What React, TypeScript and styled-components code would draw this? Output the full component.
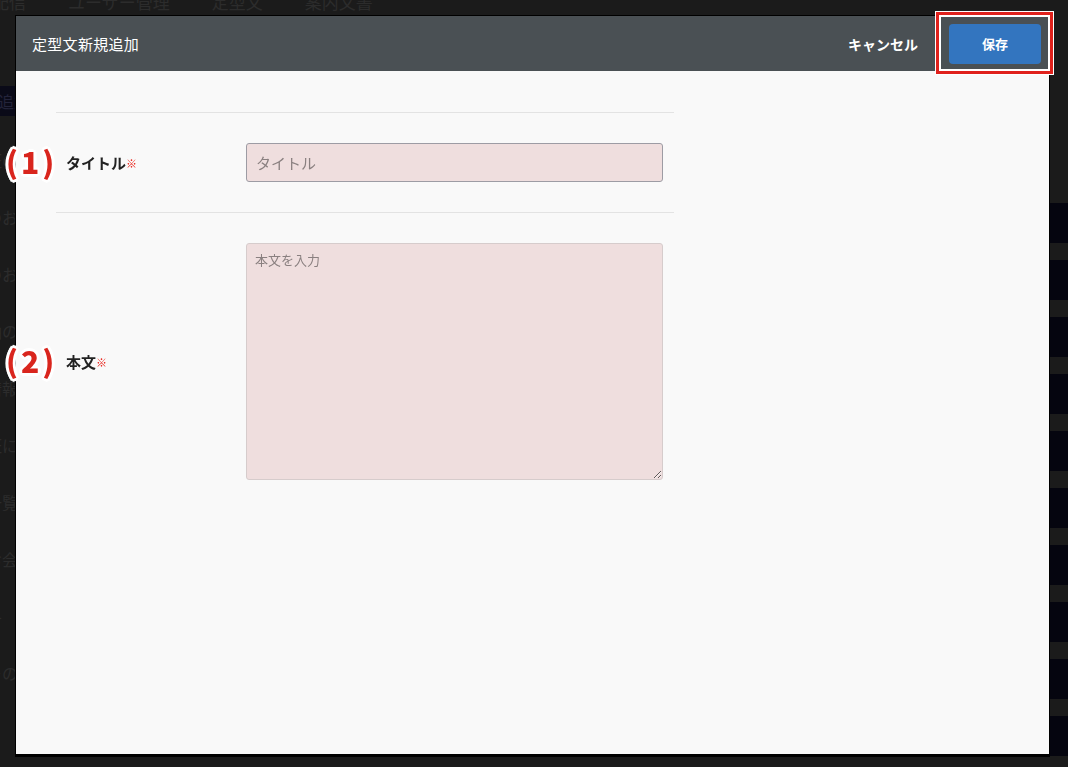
import React from 'react';
import styled, { createGlobalStyle } from 'styled-components';

const GlobalStyle = createGlobalStyle`
  html, body {
    margin: 0;
    padding: 0;
    background: #1b1b1b;
    overflow: hidden;
  }
  body {
    font-family: "Noto Sans CJK JP", "Noto Sans", sans-serif;
  }
`

/* dimmed page behind the dialog */
const BackPage = styled.div`
  width: 1068px;
  height: 767px;
  overflow: hidden;
  color: #2c2c2c;
  display: flex;
  flex-direction: column;
`

const BackNav = styled.nav`
  display: flex;
  gap: 42px;
  margin-top: -8px;
  margin-left: -8px;
  font-size: 17px;
  line-height: 20px;
  height: 20px;
`

const BackBody = styled.div`
  flex: 1;
  display: flex;
  justify-content: space-between;
`

const BackSide = styled.ul`
  list-style: none;
  margin: 74px 0 0 -14px;
  padding: 0;
  display: flex;
  flex-direction: column;
  font-size: 16px;
`

const BackAddButton = styled.li`
  background: #0a0a18;
  color: #23233a;
  height: 30px;
  line-height: 30px;
  padding-left: 12px;
  width: 60px;
  margin-bottom: 32px;
`

const BackSideItem = styled.li`
  height: 57px;
  line-height: 24px;
`

const BackRight = styled.div`
  margin: 150px -30px 0 0;
  display: flex;
  flex-direction: column;
  gap: 17px;
  width: 80px;
  font-size: 16px;
  font-weight: bold;
`

const BackOpButton = styled.div`
  height: 40px;
  border-radius: 5px;
  background: #05050f;
`

/* dialog */
const Overlay = styled.div`
  position: fixed;
  inset: 0;
`

const Dialog = styled.div`
  position: absolute;
  top: 16px;
  left: 16px;
  width: 1033px;
  height: 738px;
  background: #f9f9f9;
  box-shadow: 0 0 0 1px #000, 0 2px 0 1px #000;
  display: flex;
  flex-direction: column;
`

const Header = styled.header`
  position: relative;
  height: 55px;
  background: #4a5054;
  display: flex;
  align-items: center;
  padding: 0 8px 0 16px;
  color: #fff;
`

const Title = styled.h1`
  margin: 0;
  flex: 1;
  font-size: 15px;
  font-weight: normal;
  letter-spacing: 0.3px;
`

const CancelButton = styled.button`
  background: none;
  border: none;
  color: #fff;
  font-family: inherit;
  font-size: 14px;
  font-weight: bold;
  padding: 0;
  margin-right: 31px;
  cursor: pointer;
`

const SaveButton = styled.button`
  width: 92px;
  height: 40px;
  background: #3375bf;
  border: none;
  border-radius: 4px;
  color: #fff;
  font-family: inherit;
  font-size: 13px;
  font-weight: bold;
  cursor: pointer;
`

const Highlight = styled.div`
  position: absolute;
  top: -4px;
  right: -4px;
  width: 117px;
  height: 62px;
  box-sizing: border-box;
  border: 3px solid #e0211c;
  box-shadow: inset 0 0 0 2px #fff, 0 0 0 1px #fff;
  pointer-events: none;
`

const Body = styled.div`
  flex: 1;
  padding: 41px 0 0 40px;
`

const Form = styled.form`
  width: 618px;
`

const Row = styled.div`
  position: relative;
  display: grid;
  grid-template-columns: 180px 417px;
  align-items: center;
  padding: 30px 0 30px 10px;
  border-top: 1px solid #e3e3e3;
`

const Label = styled.label`
  font-size: 15px;
  font-weight: bold;
  color: #222;
`

const Required = styled.span`
  color: #e8180f;
  font-size: 11px;
  font-weight: 900;
  vertical-align: 1px;
`

const Marker = styled.span`
  position: absolute;
  left: -50px;
  top: 50%;
  transform: translateY(-54%);
  font-family: "Noto Sans CJK JP", "Noto Sans", sans-serif;
  font-size: 30px;
  font-weight: 900;
  color: #d9251d;
  letter-spacing: 3px;
  text-shadow:
    2px 0 0 #fff, -2px 0 0 #fff, 0 2px 0 #fff, 0 -2px 0 #fff,
    2px 2px 0 #fff, -2px -2px 0 #fff, 2px -2px 0 #fff, -2px 2px 0 #fff,
    3px 0 0 #fff, -3px 0 0 #fff, 0 3px 0 #fff, 0 -3px 0 #fff;
`

const fieldStyle = `
  box-sizing: border-box;
  width: 417px;
  background: #efdede;
  border-radius: 3px;
  font-family: "Noto Sans CJK JP", "Noto Sans", sans-serif;
  color: #333;
  outline: none;
  &::placeholder {
    color: #8a8080;
  }
`

const TextInput = styled.input`
  ${fieldStyle}
  height: 39px;
  border: 1px solid #9d9ca4;
  padding: 0 9px;
  font-size: 15px;
`

const TextArea = styled.textarea`
  ${fieldStyle}
  height: 237px;
  border: 1px solid #d6cccc;
  padding: 6px 8px;
  font-size: 13px;
  resize: vertical;
`

const navItems = ['配信', 'ユーザー管理', '定型文', '案内文書'];
const sideItems = ['証の', 'のお', 'のお', '油の', '情報', '証に', '一覧', 'お会', '各', 'その'];

function App() {
  return (
    <>
      <GlobalStyle />
      <BackPage>
        <BackNav>
          {navItems.map((n) => <span key={n}>{n}</span>)}
        </BackNav>
        <BackBody>
          <BackSide>
            <BackAddButton>追加</BackAddButton>
            {sideItems.map((s, i) => <BackSideItem key={i}>{s}</BackSideItem>)}
          </BackSide>
          <BackRight>
            <span>操作</span>
            {Array.from({ length: 10 }).map((_, i) => <BackOpButton key={i} />)}
          </BackRight>
        </BackBody>
      </BackPage>

      <Overlay>
        <Dialog>
          <Header>
            <Title>定型文新規追加</Title>
            <CancelButton type="button">キャンセル</CancelButton>
            <SaveButton type="button">保存</SaveButton>
            <Highlight />
          </Header>
          <Body>
            <Form>
              <Row>
                <Marker>(1)</Marker>
                <Label>タイトル<Required>※</Required></Label>
                <TextInput placeholder="タイトル" />
              </Row>
              <Row>
                <Marker>(2)</Marker>
                <Label>本文<Required>※</Required></Label>
                <TextArea placeholder="本文を入力" />
              </Row>
            </Form>
          </Body>
        </Dialog>
      </Overlay>
    </>
  );
}

export default App;
